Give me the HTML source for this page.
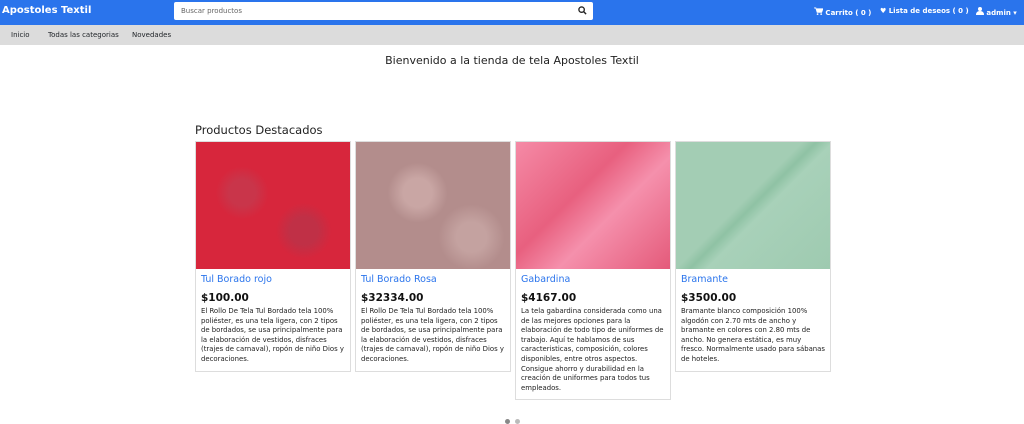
<!DOCTYPE html>
<html><head><meta charset="utf-8"><style>
*{box-sizing:border-box;margin:0;padding:0}
body{width:1024px;height:421px;overflow:hidden;background:#fff;font-family:"DejaVu Sans",sans-serif;color:#212529;position:relative}
.nav{position:absolute;top:0;left:0;width:1024px;height:25px;background:#2a74ec}
.brand{position:absolute;left:2px;top:5px;color:#fff;font-size:10px;font-weight:bold}
.search{position:absolute;left:174px;top:2px;width:419px;height:18px;background:#fff;border-radius:2px;font-size:7px;color:#666;padding:5px 7px}
.search svg{position:absolute;right:6px;top:4px}
.r{position:absolute;top:7px;color:#fff;font-size:7px;font-weight:bold}
.sub{position:absolute;top:25px;left:0;width:1024px;height:20px;background:#dcdcdc;font-size:7px}
.sub span{position:absolute;top:6px}
h1{position:absolute;top:54px;left:0;width:1024px;text-align:center;font-size:11px;font-weight:normal;color:#222}
h2{position:absolute;top:123px;left:195px;font-size:11.5px;font-weight:normal;color:#222}
.card{position:absolute;top:141px;width:156px;border:1px solid #ddd;background:#fff}
.img{height:127px}
.b{padding:4px 5px 6px 5px}
.t{color:#2a74ec;font-size:9.5px;margin-top:1px}
.p{font-size:10.5px;font-weight:bold;margin-top:7px;color:#111}
.d{font-size:6.9px;line-height:9.6px;margin-top:3px;color:#222}
.dot{position:absolute;top:419px;width:5px;height:5px;border-radius:50%;background:#bbb}
</style></head><body>
<div class="nav">
<div class="brand">Apostoles Textil</div>
<div class="search">Buscar productos<svg width="9" height="9" viewBox="0 0 10 10"><circle cx="4" cy="4" r="3" fill="none" stroke="#222" stroke-width="1.5"/><path d="M6.3 6.3L9 9" stroke="#222" stroke-width="1.6"/></svg></div>
<div class="r" style="left:814px"><svg width="9" height="8" viewBox="0 0 10 9"><path d="M0 1h2l1.5 5h5L10 2H3" fill="#fff" stroke="#fff" stroke-width="1"/><circle cx="4" cy="8" r="1" fill="#fff"/><circle cx="8" cy="8" r="1" fill="#fff"/></svg> Carrito ( 0 )</div>
<div class="r" style="left:880px">♥ Lista de deseos ( 0 )</div>
<div class="r" style="left:976px"><svg width="8" height="8" viewBox="0 0 8 8"><circle cx="4" cy="2" r="2" fill="#fff"/><path d="M0 8q0-4 4-4t4 4z" fill="#fff"/></svg> admin ▾</div>
</div>
<div class="sub"><span style="left:11px">Inicio</span><span style="left:48px">Todas las categorias</span><span style="left:132px">Novedades</span></div>
<h1>Bienvenido a la tienda de tela Apostoles Textil</h1>
<h2>Productos Destacados</h2>
<div class="card" style="left:195px"><div class="img" style="background:radial-gradient(circle at 30% 40%,#c9354a 0 10%,transparent 20%),radial-gradient(circle at 70% 70%,#c03046 0 10%,transparent 20%),#d7263c"></div><div class="b"><div class="t">Tul Borado rojo</div><div class="p">$100.00</div><div class="d">El Rollo De Tela Tul Bordado tela 100% poliéster, es una tela ligera, con 2 tipos de bordados, se usa principalmente para la elaboración de vestidos, disfraces (trajes de carnaval), ropón de niño Dios y decoraciones.</div></div></div>
<div class="card" style="left:355px"><div class="img" style="background:radial-gradient(circle at 40% 40%,#c9a6a4 0 12%,transparent 25%),radial-gradient(circle at 75% 75%,#c4a2a0 0 10%,transparent 22%),#b38d8c"></div><div class="b"><div class="t">Tul Borado Rosa</div><div class="p">$32334.00</div><div class="d">El Rollo De Tela Tul Bordado tela 100% poliéster, es una tela ligera, con 2 tipos de bordados, se usa principalmente para la elaboración de vestidos, disfraces (trajes de carnaval), ropón de niño Dios y decoraciones.</div></div></div>
<div class="card" style="left:515px"><div class="img" style="background:linear-gradient(135deg,#f58aa6,#e8607f 40%,#f590ac 60%,#e45a7a)"></div><div class="b"><div class="t">Gabardina</div><div class="p">$4167.00</div><div class="d">La tela gabardina considerada como una de las mejores opciones para la elaboración de todo tipo de uniformes de trabajo. Aquí te hablamos de sus caracteristicas, composición, colores disponibles, entre otros aspectos. Consigue ahorro y durabilidad en la creación de uniformes para todos tus empleados.</div></div></div>
<div class="card" style="left:675px"><div class="img" style="background:linear-gradient(135deg,#a3cdb4 0 45%,#8fc2a4 50%,#a8d1b9 56%,#9ecab0)"></div><div class="b"><div class="t">Bramante</div><div class="p">$3500.00</div><div class="d">Bramante blanco composición 100% algodón con 2.70 mts de ancho y bramante en colores con 2.80 mts de ancho. No genera estática, es muy fresco. Normalmente usado para sábanas de hoteles.</div></div></div>
<div class="dot" style="left:505px;background:#888"></div><div class="dot" style="left:515px"></div>
</body></html>
